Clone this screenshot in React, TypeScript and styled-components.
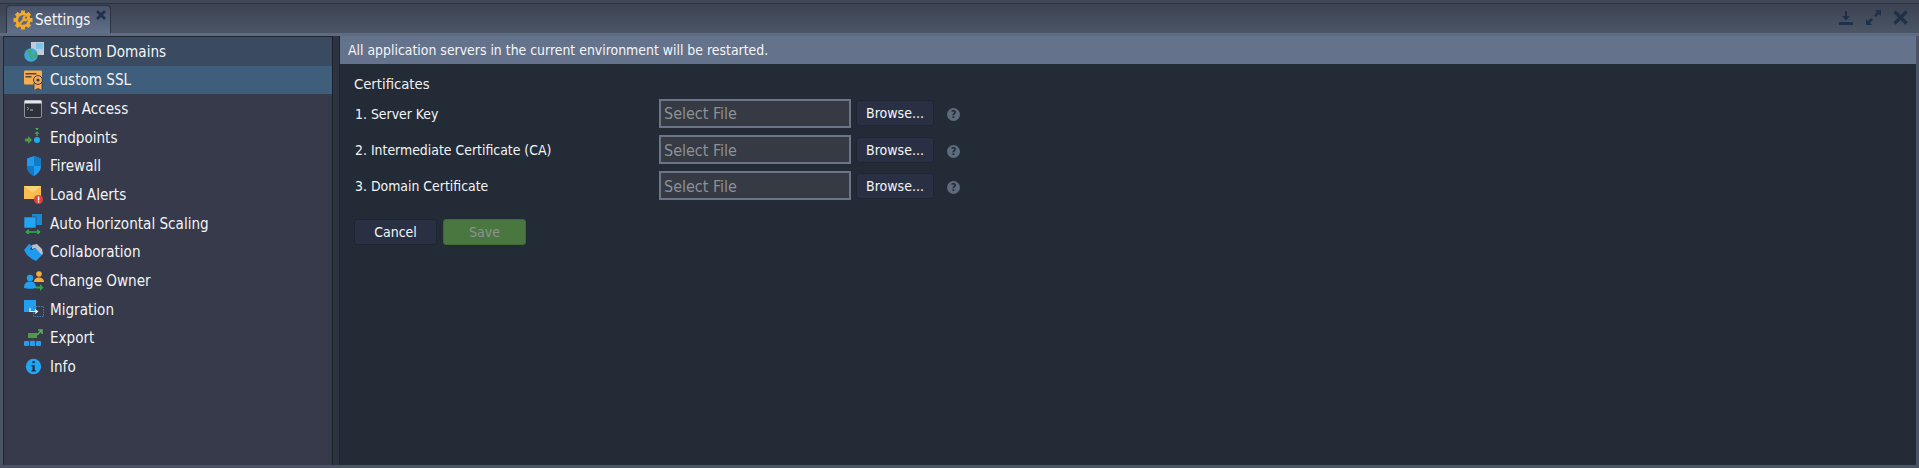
import React from "react";
import styled, { createGlobalStyle } from "styled-components";

const Global = createGlobalStyle`
  html, body { margin: 0; padding: 0; background: #3d4555; }
  body { font-family: "DejaVu Sans Condensed", "DejaVu Sans", sans-serif; font-stretch: condensed; color: #f2f4f6; }
  #root { width: 1919px; height: 468px; overflow: hidden; }
`;

const Windowed = styled.div`
  width: 1919px; height: 468px; display: flex; flex-direction: column; box-sizing: border-box;
  background: #4a5465;
`;
const TabBar = styled.div`
  flex: none; display: flex; align-items: flex-end; justify-content: space-between; box-sizing: border-box;
  padding: 1px 11px 0 6px;
  border-top: 1px solid #2d3440; height: 30px;
  background: linear-gradient(#3c4353, #4b5566);
`;
const Top = styled.div`height: 3px; flex: none; background: #414858;`;
const Tab = styled.div`
  width: 105px; height: 28px; box-sizing: border-box; display: flex; align-items: center; gap: 2px; padding: 0 0 0 6px;
  position: relative; border: 1px solid #2b3240; border-bottom: none; border-radius: 4px 4px 0 0;
  background: linear-gradient(#49536a, #616f89); font-size: 15px; color: #f4f6f8;
`;
const TabClose = styled.svg`position: absolute; right: 3px; top: 3px; width: 12px; height: 12px;`;
const Tools = styled.div`display: flex; align-items: center; gap: 12.5px; height: 28px; padding-bottom: 3px; box-sizing: border-box;`;
const Strip = styled.div`height: 3px; flex: none; background: #5d6b84;`;
const Body = styled.div`flex: 1; display: flex; min-height: 0; padding: 0 3px 3px 3px; background: #4a5465;`;
const Sidebar = styled.nav`
  width: 330px; flex: none; background: #363a4a; box-sizing: border-box; border: 1px solid #1f2630; border-bottom: none;
  border-right: 1px solid #1b2029; display: flex; flex-direction: column;
`;
const Gutter = styled.div`width: 6px; flex: none; background: #2b3440; border-right: 1px solid #1c232c;`;
const Row = styled.div<{ $state?: "hover" | "active" }>`
  height: 28.67px; flex: none; display: flex; align-items: center; box-sizing: border-box; padding: 1px 0 0 20px; gap: 6px;
  font-size: 15.1px; color: #f2f4f6;
  background: ${(p) => (p.$state === "active" ? "#3f5e7c" : p.$state === "hover" ? "#3a4a60" : "transparent")};
`;
const RowIcon = styled.svg`width: 20px; height: 20px; flex: none;`;
const Main = styled.main`flex: 1; background: #232c36; display: flex; flex-direction: column; min-width: 0;`;
const Notice = styled.div`
  height: 28px; flex: none; box-sizing: border-box; padding-left: 8px; display: flex; align-items: center;
  background: #64728c; font-size: 13.9px; color: #f4f6f8;
`;
const Form = styled.div`padding: 10px 0 0 14px; display: flex; flex-direction: column;`;
const Heading = styled.div`font-size: 14.7px; height: 20px; line-height: 20px; color: #eef0f3;`;
const FieldGrid = styled.div`display: grid; grid-template-columns: 305px 192px 82px 30px; grid-auto-rows: 36.4px; margin-top: 1px; align-items: center;`;
const Label = styled.div`font-size: 13.9px; padding-left: 1px; margin-top: 1px; color: #f2f4f6;`;
const FileBox = styled.div`
  height: 29px; box-sizing: border-box; border: 2px solid #6b7587; background: #353a43; color: #8d9197;
  font-size: 16px; display: flex; align-items: center; padding: 1px 0 0 3px;
`;
const Button = styled.button<{ $save?: boolean }>`
  height: 26px; box-sizing: border-box; border-radius: 3px; font-family: inherit; font-stretch: inherit; padding: 0; display: flex; align-items: center; justify-content: center;
  border: 1px solid ${(p) => (p.$save ? "#3f6a38" : "#1f2533")};
  background: ${(p) => (p.$save ? "#4a773f" : "#2a3044")};
  color: ${(p) => (p.$save ? "#8b9490" : "#f4f6f8")}; font-size: 14px; width: 83px;
`;
const Browse = styled(Button)`width: 78px; margin-left: 5px;`;
const Help = styled.div`
  width: 13px; height: 13px; border-radius: 50%; background: #5f6a7d; color: #232c36; font-size: 11px; font-weight: 700;
  display: flex; align-items: center; justify-content: center; margin: 3px 0 0 14px; line-height: 1;
`;
const Actions = styled.div`display: flex; gap: 6px; margin-top: 15px;`;

const D = "#1f3148";

const Gear = () => (
  <svg width="20" height="20" viewBox="0 0 20 20">
    <g fill="#f0a830">
      <circle cx="10" cy="10" r="7.6" />
      {[0, 45, 90, 135, 180, 225, 270, 315].map((a) => (
        <rect key={a} x="8" y="0.5" width="4" height="4" transform={`rotate(${a} 10 10)`} />
      ))}
    </g>
    <circle cx="10" cy="10" r="4.8" fill="#5a6780" />
    <path d="M6.500 14l4.400-4.600" stroke="#f0a830" strokeWidth="2" />
    <path d="M9.500 9a3 3 0 0 1 4.200-3.300l-2 2 1.500 1.300 1.800-1.800A3 3 0 0 1 11 11z" fill="#f0a830" />
  </svg>
);

const icons: Record<string, React.ReactNode> = {
  domains: (
    <>
      <rect x="7" y="0" width="13" height="13" fill="#c3ccd6" />
      <rect x="12" y="1" width="7" height="6" fill="#7cc4ea" />
      <circle cx="7" cy="13" r="6.800" fill="#3aa9d8" />
      <path d="M2 9c2-1.500 5-1.500 6-1l-1 3 3 2-2 5-2-2-1-4zM10.500 10l2.500 1 .5 3-3 3z" fill="#43a878" />
    </>
  ),
  ssl: (
    <>
      <rect x="0" y="0.500" width="18" height="14" rx="1" fill="#f6ac4f" />
      <rect x="1.500" y="3" width="11" height="1.500" fill="#5a4630" />
      <rect x="1.500" y="6" width="6" height="1.500" fill="#5a4630" />
      <path d="M10 13h8v7.500l-4-2-4 2z" fill="#f6ac4f" stroke="#363a4a" strokeWidth=".8" />
      <circle cx="14" cy="10" r="4.400" fill="#f6ac4f" stroke="#363a4a" />
      <circle cx="14" cy="10" r="1.600" fill="#363a4a" />
    </>
  ),
  ssh: (
    <>
      <rect x="0.500" y="1.500" width="17" height="17" rx="1.500" fill="#2d3038" stroke="#8d939c" />
      <rect x="0.500" y="1.500" width="17" height="3" fill="#e4e6ea" />
      <path d="M3 8l2 1.500L3 11" stroke="#7fbf8a" fill="none" strokeWidth=".8" />
      <rect x="6" y="10.500" width="3" height="1" fill="#b8bcc4" />
    </>
  ),
  endpoints: (
    <>
      <circle cx="13" cy="0.500" r="1.400" fill="#2bbf4a" />
      <path d="M13 3l2.500 3h-1.800v2h-1.400V6h-1.800z" fill="#4f9a4a" />
      <path d="M1 10.500h3V8l4 4-4 4v-2.500H1z" fill="#4f9a4a" />
      <circle cx="13" cy="12" r="3" fill="#25a8f0" />
    </>
  ),
  firewall: (
    <>
      <path d="M10 0l7 2.500V10c0 5-3.500 8-7 10-3.500-2-7-5-7-10V2.500z" fill="#1e9bf0" />
      <path d="M10 0l7 2.500V10H10zM3 10h7v10c-3.500-2-7-5-7-10z" fill="#137ac6" />
    </>
  ),
  alerts: (
    <>
      <rect x="0" y="1" width="17" height="13" fill="#f9bc4e" />
      <path d="M0 1l8.500 7L17 1z" fill="#fbd276" />
      <circle cx="14.500" cy="14.500" r="4.500" fill="#e0433d" />
      <rect x="13.800" y="11.500" width="1.500" height="4" fill="#fff" />
      <rect x="13.800" y="16.200" width="1.500" height="1.300" fill="#fff" />
    </>
  ),
  scaling: (
    <>
      <rect x="8" y="0" width="10" height="11" fill="#1b88d2" />
      <rect x="0" y="3" width="12" height="11" fill="#22a5f5" stroke="#363a4a" strokeWidth=".6" />
      <path d="M2 18h14M2 18l3-2.200M2 18l3 2.200M16 18l-3-2.200M16 18l-3 2.200" stroke="#2bb24a" strokeWidth="1.300" fill="none" />
    </>
  ),
  collab: (
    <>
      <path d="M8 3l5-1 5 5 1 5-2 1-6-7-3 1z" fill="#b9c0ca" />
      <path d="M0 8l5-6 4 2-3 3 2 1 3-2 7 7-6 6-4-2-5-4z" fill="#1e9bf0" />
    </>
  ),
  owner: (
    <>
      <circle cx="15" cy="3" r="2.800" fill="#f6ac3c" />
      <path d="M10 11c0-3 2-4.500 5-4.500s5 1.500 5 4.500z" fill="#f6ac3c" />
      <circle cx="6" cy="7" r="3.200" fill="#22a0ef" />
      <path d="M0 17c0-5 2.500-6.500 6-6.500s6 1.500 6 6.500c-2 1-10 1-12 0z" fill="#22a0ef" />
      <path d="M12 15.500h4V13l3.500 3.500L16 20v-2.500h-4z" fill="#2aa84a" />
    </>
  ),
  migration: (
    <>
      <rect x="0" y="0" width="12" height="12" fill="#22a0ef" />
      <rect x="9.500" y="6.500" width="10" height="10" fill="none" stroke="#3f7fb4" strokeDasharray="1.500 1" />
      <path d="M6 8v3.500h7M11 9.500l2.500 2-2.500 2" stroke="#e8edf2" strokeWidth="1.200" fill="none" />
    </>
  ),
  export: (
    <>
      <rect x="4" y="5" width="9" height="5" fill="#4f9a4a" />
      <path d="M8.500 10v3M3 14l5.500-2 5.500 2" stroke="#3f4550" strokeWidth="1.400" fill="none" />
      <path d="M13 7l4-4M14 2h4v4" stroke="#63b05a" strokeWidth="1.500" fill="none" />
      <rect x="0" y="13" width="5" height="5" rx="1" fill="#22a0ef" />
      <rect x="6" y="13" width="5" height="5" fill="#22a0ef" />
      <rect x="12" y="13" width="5" height="5" rx="1" fill="#22a0ef" />
    </>
  ),
  info: (
    <>
      <circle cx="9.500" cy="9.500" r="7.700" fill="#1fa6f4" />
      <rect x="8.500" y="4" width="2.200" height="2.200" fill="#232c36" />
      <path d="M7.500 8h3.200v5.200h1v1.200H7.500v-1.200h1V9.200h-1z" fill="#232c36" />
    </>
  ),
};

const items: [string, string, ("hover" | "active")?][] = [
  ["Custom Domains", "domains", "hover"],
  ["Custom SSL", "ssl", "active"],
  ["SSH Access", "ssh"],
  ["Endpoints", "endpoints"],
  ["Firewall", "firewall"],
  ["Load Alerts", "alerts"],
  ["Auto Horizontal Scaling", "scaling"],
  ["Collaboration", "collab"],
  ["Change Owner", "owner"],
  ["Migration", "migration"],
  ["Export", "export"],
  ["Info", "info"],
];

const fields = ["1. Server Key", "2. Intermediate Certificate (CA)", "3. Domain Certificate"];

export default function App() {
  return (
    <Windowed>
      <Global />
      <Top />
      <TabBar>
        <Tab>
          <Gear />
          Settings
          <TabClose viewBox="0 0 12 12"><path d="M2 2l8 8M10 2l-8 8" stroke={D} strokeWidth="2.800" /></TabClose>
        </Tab>
        <Tools>
          <svg width="14" height="14" viewBox="0 0 14 14"><path d="M6 0h2v5h3L7 9.500 3 5h3zM0 11h14v3H0z" fill={D} /></svg>
          <svg width="15" height="15" viewBox="0 0 15 15"><path d="M9 0h6v6l-2-2-3 3-2-2 3-3zM6 15H0V9l2 2 3-3 2 2-3 3z" fill={D} /></svg>
          <svg width="15" height="15" viewBox="0 0 15 15"><path d="M1.500 1.500l12 12M13.500 1.500l-12 12" stroke={D} strokeWidth="3.400" /></svg>
        </Tools>
      </TabBar>
      <Strip />
      <Body>
        <Sidebar>
          {items.map(([label, icon, state]) => (
            <Row key={label} $state={state}>
              <RowIcon viewBox="0 0 20 20">{icons[icon]}</RowIcon>
              {label}
            </Row>
          ))}
        </Sidebar>
        <Gutter />
        <Main>
          <Notice>All application servers in the current environment will be restarted.</Notice>
          <Form>
            <Heading>Certificates</Heading>
            <FieldGrid>
              {fields.map((f) => (
                <React.Fragment key={f}>
                  <Label>{f}</Label>
                  <FileBox>Select File</FileBox>
                  <Browse>Browse...</Browse>
                  <Help>?</Help>
                </React.Fragment>
              ))}
            </FieldGrid>
            <Actions>
              <Button>Cancel</Button>
              <Button $save>Save</Button>
            </Actions>
          </Form>
        </Main>
      </Body>
    </Windowed>
  );
}
